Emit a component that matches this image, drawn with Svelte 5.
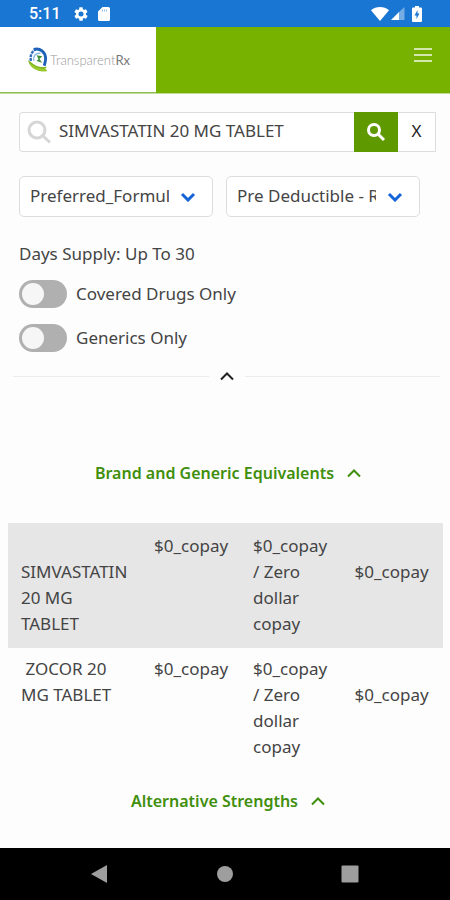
<script lang="ts">
  // Drug search screen: filters on top, collapsible result groups below.
  interface Drug {
    name: string;
    copay: string;
    tier: string;
    price: string;
  }

  let query = $state("SIMVASTATIN 20 MG TABLET");
  let coveredOnly = $state(false);
  let genericsOnly = $state(false);
  let showFilters = $state(true);
  let showEquivalents = $state(true);
  let showStrengths = $state(true);

  // A leading newline drops the value to the second line of its cell.
  const drugs: Drug[] = [
    {
      name: "\nSIMVASTATIN 20 MG TABLET",
      copay: "$0_copay",
      tier: "$0_copay / Zero dollar copay",
      price: "\n$0_copay",
    },
    {
      name: " ZOCOR 20 MG TABLET",
      copay: "$0_copay",
      tier: "$0_copay / Zero dollar copay",
      price: "\n$0_copay",
    },
  ];
</script>

{#snippet chevron(open: boolean)}
  <svg class="chevron" class:closed={!open} viewBox="0 0 16 10" aria-hidden="true">
    <path d="M2 8.5 8 2.5l6 6" />
  </svg>
{/snippet}

<div class="screen">
  <div class="status">
    <span class="time">5:11</span>
    <svg class="gear" viewBox="0 0 24 24" aria-hidden="true">
      <path
        fill-rule="evenodd"
        d="M19.4 13a7.5 7.5 0 0 0 0-2l2.1-1.65a.5.5 0 0 0 .12-.64l-2-3.46a.5.5 0 0 0-.6-.22l-2.5 1a7.3 7.3 0 0 0-1.7-.98l-.38-2.65A.5.5 0 0 0 14 2h-4a.5.5 0 0 0-.5.42l-.38 2.65a7.7 7.7 0 0 0-1.7.98l-2.5-1a.5.5 0 0 0-.6.22l-2 3.46a.5.5 0 0 0 .12.64L4.6 11a7.9 7.9 0 0 0 0 2l-2.1 1.65a.5.5 0 0 0-.12.64l2 3.46c.12.22.38.3.6.22l2.5-1c.52.4 1.08.73 1.7.98l.38 2.65c.03.24.24.4.5.4h4c.25 0 .46-.18.5-.42l.38-2.65a7.7 7.7 0 0 0 1.7-.98l2.5 1c.22.08.48 0 .6-.22l2-3.46a.5.5 0 0 0-.12-.64zM12 15.8a3.8 3.8 0 1 1 0-7.6 3.8 3.8 0 0 1 0 7.6z"
      />
    </svg>
    <svg class="card" viewBox="0 0 12 14" aria-hidden="true">
      <path d="M4.5 0H10.5A1.5 1.5 0 0 1 12 1.5V12.5A1.5 1.5 0 0 1 10.5 14H1.5A1.5 1.5 0 0 1 0 12.5V4.5z" />
      <path class="slots" d="M4.5 2.5v2M6.5 2.5v2M8.5 2.5v2" />
    </svg>
    <span class="signals">
      <svg class="wifi" viewBox="0 0 18 14" aria-hidden="true">
        <path d="M9 14 0 3.2C5 -1 13 -1 18 3.2z" />
      </svg>
      <svg class="cell" viewBox="0 0 14 13" aria-hidden="true">
        <path d="M0 13 8 5v8z" />
        <path opacity=".4" d="M8 5 13.5 0v13H8z" />
      </svg>
      <svg class="battery" viewBox="0 0 10 16" aria-hidden="true">
        <path d="M3 0h4v1.5h2a1 1 0 0 1 1 1V15a1 1 0 0 1-1 1H1a1 1 0 0 1-1-1V2.5a1 1 0 0 1 1-1h2z" />
        <path class="bolt" d="M5.5 4 2.5 9.500h2V13l3-5.500h-2z" />
      </svg>
    </span>
  </div>

  <header class="topbar">
    <a class="brand" href="#home">
      <svg class="mark" viewBox="0 0 22 26" aria-hidden="true">
        <path d="M3 14C2 8 4 4 8 2" fill="none" stroke="#2f6fbd" stroke-width="2.5" stroke-dasharray="3 1" />
        <path d="M6 2c7-2 12 3 12.500 9 0 3-.5 5-1.500 8" fill="none" stroke="#1c62b8" stroke-width="3" />
        <path d="M6 14C5 9 8 5 13 6" fill="none" stroke="#8db8e2" stroke-width="1.500" />
        <path d="m9 8 6 1-3 3 3 4-6-2 2-2z" fill="#3f8f3a" />
        <path d="M0 13c4 3 7 6 12 7 3 1 5 0 8 0l-2 2 2 2.500C13 26 2 23 0 13z" fill="#7fb522" />
        <path d="M1 15c4 4 8 6 13 7l4 0 2 2.500C13 26 3 22 1 15z" fill="#9acb2c" />
      </svg>
      <span class="wordmark">Transparent<b>Rx</b></span>
    </a>
    <button class="menu" aria-label="Menu">
      <svg viewBox="0 0 18 16" aria-hidden="true">
        <path d="M0 2h18M0 8h18M0 14h18" />
      </svg>
    </button>
  </header>

  <main>
    <form class="search" onsubmit={(e) => e.preventDefault()}>
      <label class="field">
        <svg viewBox="0 0 24 24" aria-hidden="true">
          <circle cx="10" cy="10" r="8" />
          <path d="m16 16 7 6.500" />
        </svg>
        <input type="text" aria-label="Drug name" bind:value={query} />
      </label>
      <button class="go" aria-label="Search">
        <svg viewBox="0 0 20 20" aria-hidden="true">
          <circle cx="8" cy="8" r="5.5" />
          <path d="m12 12 6 6" />
        </svg>
      </button>
      <button class="clear" type="button" aria-label="Clear" onclick={() => (query = "")}>X</button>
    </form>

    {#if showFilters}
      <div class="selects">
        <div class="select">
          <select aria-label="Formulary">
            <option>Preferred_Formul</option>
          </select>
          <svg viewBox="0 0 16 10" aria-hidden="true"><path d="m2 2 6 6 6-6" /></svg>
        </div>
        <div class="select">
          <select aria-label="Benefit phase">
            <option>Pre Deductible - R</option>
          </select>
          <svg viewBox="0 0 16 10" aria-hidden="true"><path d="m2 2 6 6 6-6" /></svg>
        </div>
      </div>

      <div class="supply">Days Supply: Up To 30</div>
      <label class="toggle">
        <input type="checkbox" bind:checked={coveredOnly} />
        Covered Drugs Only
      </label>
      <label class="toggle">
        <input type="checkbox" bind:checked={genericsOnly} />
        Generics Only
      </label>
    {/if}

    <div class="divider">
      <button aria-label="Toggle filters" onclick={() => (showFilters = !showFilters)}>
        {@render chevron(showFilters)}
      </button>
    </div>

    <button class="group" onclick={() => (showEquivalents = !showEquivalents)}>
      Brand and Generic Equivalents
      {@render chevron(showEquivalents)}
    </button>

    {#if showEquivalents}
      <table>
        <tbody>
          {#each drugs as drug (drug.name)}
            <tr>
              <td class="name">{drug.name}</td>
              <td class="copay">{drug.copay}</td>
              <td>{drug.tier}</td>
              <td>{drug.price}</td>
            </tr>
          {/each}
        </tbody>
      </table>
    {/if}

    <button class="group" onclick={() => (showStrengths = !showStrengths)}>
      Alternative Strengths
      {@render chevron(showStrengths)}
    </button>
  </main>

  <nav class="keys" aria-label="System">
    <button aria-label="Back">
      <svg viewBox="0 0 18 18"><path d="M0 9 16 0v18z" /></svg>
    </button>
    <button aria-label="Home">
      <svg viewBox="0 0 18 18"><circle cx="9" cy="9" r="8" /></svg>
    </button>
    <button aria-label="Recent apps">
      <svg viewBox="0 0 18 18"><rect width="17" height="17" x=".5" y=".5" rx="1" /></svg>
    </button>
  </nav>
</div>

<style>
  :global(body) {
    margin: 0;
    background: #fdfdfd;
  }

  .screen {
    display: flex;
    flex-direction: column;
    min-height: 100vh;
    color: #444;
    font: 17px/26px "Noto Sans", sans-serif;
  }

  button,
  input,
  select {
    margin: 0;
    font: inherit;
    color: inherit;
  }

  button {
    padding: 0;
    border: none;
    background: none;
    cursor: pointer;
  }

  svg {
    flex: none;
    display: block;
  }

  .status {
    display: flex;
    align-items: center;
    height: 27px;
    padding: 0 28px 0 29px;
    background: #1976d2;
    color: #fff;
    fill: #fff;
  }

  .time {
    margin-right: 12px;
    font: 500 16px/27px Roboto, sans-serif;
  }

  .gear {
    width: 16px;
    height: 16px;
    margin-right: 9px;
  }

  .card {
    width: 12px;
    height: 14px;
  }

  .slots {
    stroke: #8fbce9;
  }

  .signals {
    display: flex;
    align-items: center;
    margin-left: auto;
  }

  .wifi {
    width: 18px;
    height: 14px;
    margin-right: 2px;
  }

  .cell {
    width: 14px;
    height: 13px;
    margin-right: 7px;
  }

  .battery {
    width: 10px;
    height: 16px;
  }

  .bolt {
    fill: #1976d2;
  }

  .topbar {
    display: flex;
    justify-content: space-between;
    align-items: stretch;
    height: 66px;
    border-bottom: 1px solid #c2dc96;
    background: #78b200;
  }

  .brand {
    display: flex;
    align-items: center;
    gap: 1px;
    width: 156px;
    box-sizing: border-box;
    padding-left: 28px;
    border-bottom: 1px solid #8fbc5a;
    background: #fff;
    color: #999;
    text-decoration: none;
  }

  .mark {
    width: 21px;
    height: 26px;
  }

  .wordmark {
    font: 300 13px/20px Lato, sans-serif;
  }

  .wordmark b {
    color: #777;
    font-weight: 400;
  }

  .menu {
    align-self: center;
    margin-right: 18px;
    padding-bottom: 10px;
  }

  .menu svg {
    width: 18px;
    height: 16px;
    stroke: #d3e7ad;
    stroke-width: 2;
  }

  main {
    flex: 1;
    display: flex;
    flex-direction: column;
    padding: 18px 7px 0 8px;
  }

  .search {
    display: flex;
    height: 40px;
    margin: 0 7px 0 11px;
  }

  .field {
    flex: 1;
    display: flex;
    align-items: center;
    gap: 8px;
    min-width: 0;
    padding-left: 7px;
    border: 1px solid #ddd;
    border-right: none;
    border-radius: 4px 0 0 4px;
    background: #fff;
  }

  .field svg {
    width: 24px;
    height: 24px;
    fill: none;
    stroke: #d6d6d6;
    stroke-width: 3;
  }

  .field input {
    flex: 1;
    min-width: 0;
    padding: 0 0 2px;
    border: none;
    outline: none;
    background: none;
  }

  .go {
    width: 44px;
    background: #5f9900;
  }

  .go svg {
    width: 20px;
    height: 20px;
    margin: 0 auto;
    fill: none;
    stroke: #fff;
    stroke-width: 3;
  }

  .clear {
    width: 38px;
    padding-bottom: 2px;
    border: 1px solid #ddd;
    border-left: none;
    background: #fff;
    color: #222;
  }

  .selects {
    display: flex;
    gap: 13px;
    margin: 24px 23px 0 11px;
  }

  .select {
    flex: 1;
    display: grid;
    align-items: center;
    min-width: 0;
  }

  .select select,
  .select svg {
    grid-area: 1 / 1;
  }

  .select select {
    width: 100%;
    height: 41px;
    box-sizing: border-box;
    padding: 0 43px 2px 10px;
    border: 1px solid #ddd;
    border-radius: 5px;
    background: #fff;
    appearance: none;
  }

  .select svg {
    justify-self: end;
    width: 16px;
    height: 10px;
    margin-right: 17px;
    fill: none;
    stroke: #1565d8;
    stroke-width: 3;
    pointer-events: none;
  }

  .supply {
    margin: 24px 11px 13px;
  }

  .toggle {
    display: flex;
    align-items: center;
    gap: 9px;
    margin: 0 11px 16px;
  }

  .toggle input {
    display: flex;
    width: 48px;
    height: 28px;
    padding: 3px;
    box-sizing: border-box;
    border-radius: 14px;
    background: #b0b0b0;
    appearance: none;
    cursor: pointer;
  }

  .toggle input::before {
    content: "";
    width: 22px;
    height: 22px;
    border-radius: 50%;
    background: #f6f6f6;
  }

  .toggle input:checked {
    justify-content: flex-end;
    background: #5f9900;
  }

  .divider {
    display: flex;
    align-items: center;
    gap: 10px;
    height: 16px;
    margin: 0 3px 0 5px;
    color: #222;
  }

  .divider::before,
  .divider::after {
    content: "";
    flex: 1;
    height: 1px;
    background: #ececec;
  }

  .chevron {
    width: 16px;
    height: 10px;
    fill: none;
    stroke: currentColor;
    stroke-width: 2;
  }

  .chevron.closed {
    transform: rotate(180deg);
  }

  .group {
    display: flex;
    align-items: center;
    align-self: center;
    gap: 12px;
    padding-left: 6px;
    color: #3f8f0c;
    font-size: 16px;
    font-weight: 600;
  }

  .divider + .group {
    margin: 76px 0 37px;
  }

  table {
    width: 100%;
    margin-bottom: 28px;
    border-collapse: collapse;
    table-layout: fixed;
  }

  td {
    padding: 8px 12px 0 13px;
    vertical-align: top;
    white-space: pre-wrap;
  }

  .name {
    width: 108px;
  }

  .copay {
    width: 74px;
  }

  tr:nth-child(odd) {
    background: #e6e6e6;
  }

  tr:nth-child(odd) td {
    padding-top: 10px;
    padding-bottom: 11px;
  }

  .keys {
    display: flex;
    justify-content: center;
    gap: 107px;
    height: 52px;
    background: #000;
  }

  .keys svg {
    width: 18px;
    height: 18px;
    fill: #9e9e9e;
  }
</style>
